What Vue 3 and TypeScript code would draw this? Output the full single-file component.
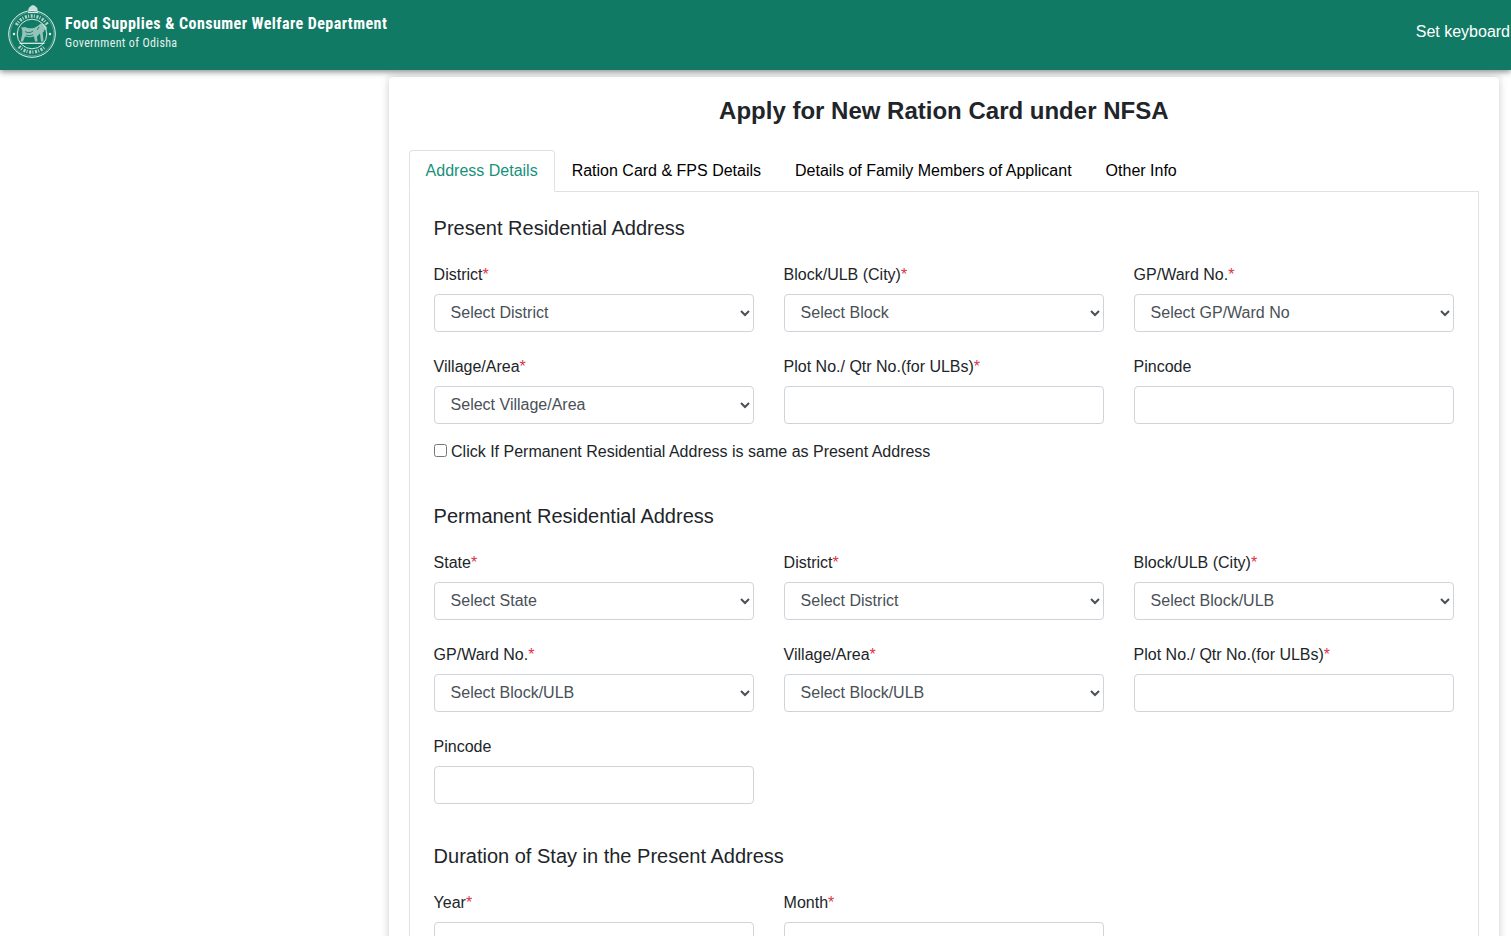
<template>
  <div class="page">
    <header class="topbar">
      <div class="brand">
        <svg class="emblem" viewBox="0 0 50 56" fill="none" stroke="#e8f3ef">
          <!-- capital on top of the seal -->
          <path d="M20.500 8c-.6-2.400.7-4 1.800-4.300.6-2 4.800-2 5.400 0 1.100.3 2.400 1.900 1.800 4.300z" fill="#c9e0d9" stroke="none" />
          <path d="M20 9.600h10" stroke-width="1" />
          <circle cx="24" cy="31" r="23.300" stroke-width="1" />
          <circle cx="24" cy="31" r="21.800" stroke-width=".5" opacity=".6" />
          <circle cx="24" cy="31" r="14.800" stroke-width=".9" />
          <!-- lettering of the seal, too small to read -->
          <path d="M8.400 22A18 18 0 0 1 39.600 22" stroke-width="3.400" stroke-dasharray="2 1.200 1 1.600" opacity=".75" />
          <path d="M11 43.500A18 18 0 0 0 37 43.500" stroke-width="3.400" stroke-dasharray="2 1.200 1 1.600" opacity=".75" />
          <circle cx="6" cy="31" r="1.200" fill="#e8f3ef" stroke="none" />
          <circle cx="42" cy="31" r="1.200" fill="#e8f3ef" stroke="none" />
          <!-- lion -->
          <path d="M13 24.500c1.500 2 1.500 5 1 8l-1.500 6h2.500l2-5c3 1 6 1 9 0l1 5h2.500l-.5-5 3-3 1 8h2.500l-.8-9c1.300-1 2-2 1.500-3l2 .5.800-2.500-3-3.500-3.500-.5-2 2-4.500 2.500c-3.500.5-7 .3-9-1z" fill="#cfe3dd" stroke="none" opacity=".7" />
          <path d="M17 28.500c2 1.500 6 1.500 8-.5M18 32c2 .8 5 .8 7-.3M31 24l-2 3" stroke="#117a65" stroke-width=".9" />
          <path d="M11.500 40.300h25" stroke-width="1.200" />
        </svg>
        <div class="brand-text">
          <div class="brand-title">Food Supplies &amp; Consumer Welfare Department</div>
          <div class="brand-sub">Government of Odisha</div>
        </div>
      </div>
      <div class="keyboard">Set keyboard</div>
    </header>

    <div class="layout">
      <main class="card">
        <h1 class="title">Apply for New Ration Card under NFSA</h1>

        <ul class="tabs">
          <li
            v-for="(tab, i) in tabs"
            :key="tab"
            class="tab"
            :class="{ active: i === 0 }"
          >
            {{ tab }}
          </li>
        </ul>

        <div class="panel">
          <section v-for="section in sections" :key="section.title" class="section">
            <h2 class="section-title">{{ section.title }}</h2>
            <div class="grid">
              <div v-for="field in section.fields" :key="field.label" class="field">
                <label class="field-label">
                  {{ field.label }}<span v-if="field.required" class="req">*</span>
                </label>
                <select v-if="field.placeholder" class="control">
                  <option>{{ field.placeholder }}</option>
                </select>
                <input v-else class="control" type="text" />
              </div>
            </div>
            <label v-if="section.sameAs" class="same-as">
              <input type="checkbox" class="check" />
              Click If Permanent Residential Address is same as Present Address
            </label>
          </section>
        </div>
      </main>
    </div>
  </div>
</template>

<script setup lang="ts">
interface Field {
  label: string;
  required?: boolean;
  placeholder?: string;
}

interface Section {
  title: string;
  sameAs?: boolean;
  fields: Field[];
}

const tabs = [
  "Address Details",
  "Ration Card & FPS Details",
  "Details of Family Members of Applicant",
  "Other Info",
];

const sections: Section[] = [
  {
    title: "Present Residential Address",
    sameAs: true,
    fields: [
      { label: "District", required: true, placeholder: "Select District" },
      { label: "Block/ULB (City)", required: true, placeholder: "Select Block" },
      { label: "GP/Ward No.", required: true, placeholder: "Select GP/Ward No" },
      { label: "Village/Area", required: true, placeholder: "Select Village/Area" },
      { label: "Plot No./ Qtr No.(for ULBs)", required: true },
      { label: "Pincode" },
    ],
  },
  {
    title: "Permanent Residential Address",
    fields: [
      { label: "State", required: true, placeholder: "Select State" },
      { label: "District", required: true, placeholder: "Select District" },
      { label: "Block/ULB (City)", required: true, placeholder: "Select Block/ULB" },
      { label: "GP/Ward No.", required: true, placeholder: "Select Block/ULB" },
      { label: "Village/Area", required: true, placeholder: "Select Block/ULB" },
      { label: "Plot No./ Qtr No.(for ULBs)", required: true },
      { label: "Pincode" },
    ],
  },
  {
    title: "Duration of Stay in the Present Address",
    fields: [
      { label: "Year", required: true },
      { label: "Month", required: true },
    ],
  },
];
</script>

<style>
html,
body {
  height: 100%;
  overflow: hidden;
}
</style>

<style scoped>
.page {
  height: 936px;
  overflow: hidden;
  background: #fff;
  font-family: "Liberation Sans", Arial, sans-serif;
  font-size: 16px;
  color: #212529;
}

.topbar {
  position: relative;
  z-index: 2;
  height: 70px;
  display: flex;
  align-items: center;
  justify-content: space-between;
  background: #117a65;
  box-shadow: 0 2px 6px rgba(0, 0, 0, 0.45);
  overflow: hidden;
}

.brand {
  display: flex;
  align-items: center;
  padding-left: 8px;
  margin-top: -5px;
}

.emblem {
  width: 50px;
  height: 56px;
  margin-right: 7px;
  margin-top: -3px;
}

.brand-text {
  color: #fff;
  font-family: Roboto, "Liberation Sans", sans-serif;
  font-stretch: 75%;
}

.brand-title {
  font-size: 16px;
  font-weight: 700;
  line-height: 20px;
  letter-spacing: 0.44px;
}

.brand-sub {
  font-size: 12px;
  line-height: 18px;
  letter-spacing: 0.35px;
  color: #e4f0ec;
}

.keyboard {
  color: #fff;
  white-space: nowrap;
  padding-right: 1px;
  margin-top: -7px;
}

.layout {
  padding: 7px 12px 0 388.6px;
}

.card {
  background: #fff;
  border-radius: 4px;
  box-shadow: 0 0 8px rgba(0, 0, 0, 0.2);
  padding: 19px 20px 20px;
}

.title {
  margin: 0 0 25px;
  text-align: center;
  font-size: 24px;
  font-weight: 700;
  line-height: 29px;
}

.tabs {
  display: flex;
  list-style: none;
  margin: 0;
  padding: 0;
  border-bottom: 1px solid #dee2e6;
}

.tab {
  padding: 8px 16px;
  margin-bottom: -1px;
  line-height: 24px;
  border: 1px solid transparent;
  border-radius: 4px 4px 0 0;
  color: #000;
}

.tab.active {
  color: #17917a;
  background: #fff;
  border-color: #dee2e6 #dee2e6 #fff;
}

.panel {
  border: 1px solid #dee2e6;
  border-top: 0;
  padding: 24px;
}

.section {
  margin-bottom: 40px;
}

.section-title {
  margin: 0 0 23px;
  font-size: 20px;
  font-weight: 400;
  line-height: 24px;
}

.grid {
  display: grid;
  grid-template-columns: repeat(3, 320px);
  column-gap: 30px;
  row-gap: 23px;
}

.field-label {
  display: block;
  margin-bottom: 7px;
  line-height: 24px;
}

.req {
  color: #dc3545;
}

.control {
  display: block;
  box-sizing: border-box;
  width: 100%;
  height: 38px;
  padding: 5px 12px 7px;
  font: inherit;
  color: #495057;
  background: #fff;
  border: 1px solid #ced4da;
  border-radius: 4px;
}

.same-as {
  display: block;
  margin-top: 16px;
  line-height: 24px;
}

.check {
  margin: 0;
  vertical-align: 0;
}
</style>
